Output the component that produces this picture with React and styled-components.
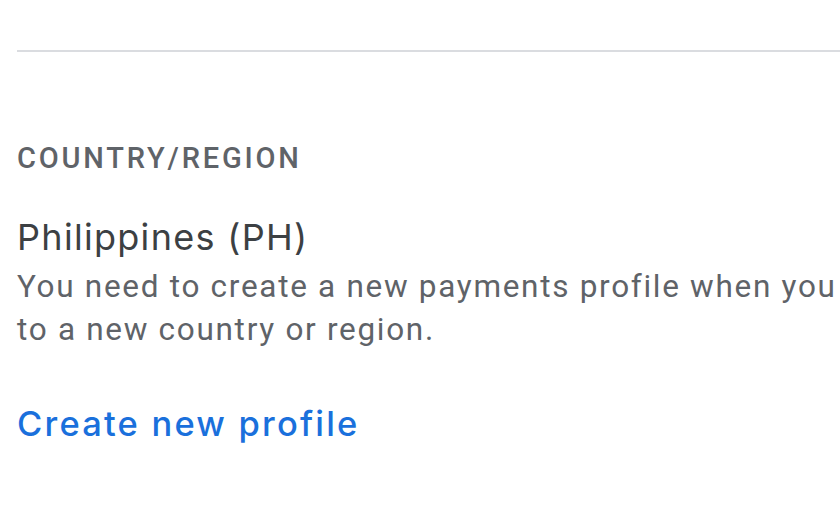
import React from 'react';
import styled, { createGlobalStyle } from 'styled-components';

const GlobalStyle = createGlobalStyle`
  html, body {
    margin: 0;
    padding: 0;
    background: #ffffff;
    overflow: hidden;
  }
`;

const Page = styled.div`
  width: 950px;
  padding: 50px 0 0 17px;
  box-sizing: border-box;
`;

const Divider = styled.hr`
  margin: 0;
  border: none;
  border-top: 2px solid #dadce0;
  width: 100%;
`;

const Section = styled.section`
  display: flex;
  flex-direction: column;
  padding-top: 86px;
`;

const Label = styled.div`
  font-family: Roboto, "Liberation Sans", sans-serif;
  font-weight: 500;
  font-size: 29px;
  line-height: 40px;
  letter-spacing: 2.8px;
  color: #5f6368;
  text-transform: uppercase;
`;

const Title = styled.div`
  margin-top: 36px;
  font-family: Inter, "Open Sans", sans-serif;
  font-size: 36px;
  line-height: 46px;
  letter-spacing: 1.3px;
  color: #3c4043;
`;

const Body = styled.p`
  margin: 5px 0 0;
  font-family: Roboto, "Liberation Sans", sans-serif;
  font-size: 31.5px;
  line-height: 43px;
  letter-spacing: 1.7px;
  color: #5f6368;
`;

const Link = styled.a`
  margin-top: 50px;
  font-family: Inter, "Open Sans", sans-serif;
  font-weight: 500;
  font-size: 34.5px;
  line-height: 46px;
  letter-spacing: 2.2px;
  color: #1a70dc;
  text-decoration: none;
  cursor: pointer;
`;

export default function App() {
  return (
    <>
      <GlobalStyle />
      <Page>
        <Divider />
        <Section>
          <Label>Country/Region</Label>
          <Title>Philippines (PH)</Title>
          <Body>
            You need to create a new payments profile when you move to a new
            country or region.
          </Body>
          <Link>Create new profile</Link>
        </Section>
      </Page>
    </>
  );
}
